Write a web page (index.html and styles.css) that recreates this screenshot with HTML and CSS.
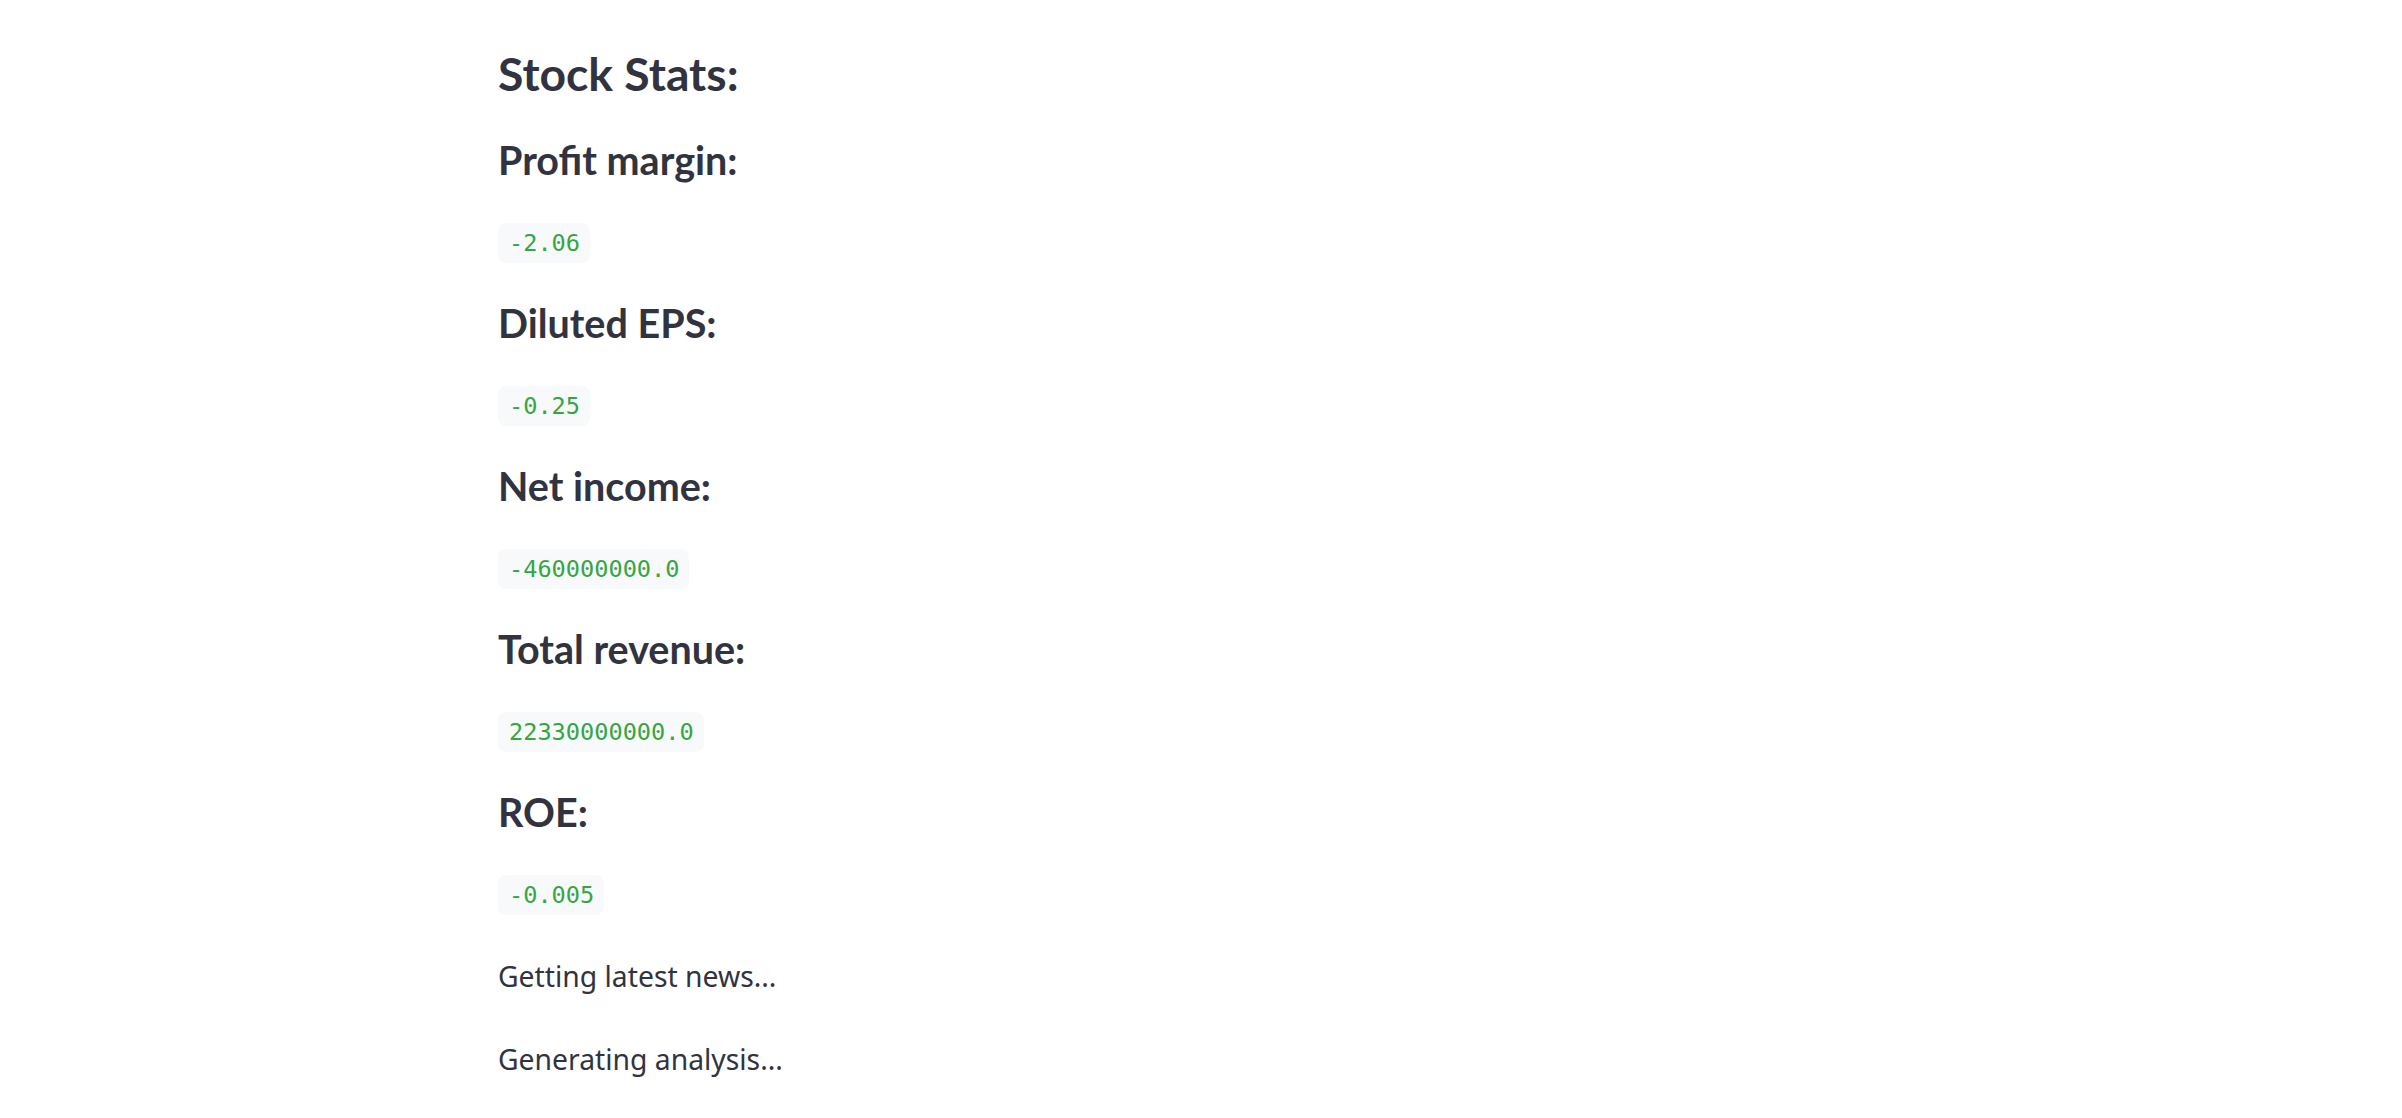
FILE: index.html
```html
<!DOCTYPE html>
<html>
<head>
<meta charset="utf-8">
<link rel="stylesheet" href="styles.css">
</head>
<body>
<main class="main">
  <h2 class="title">Stock Stats:</h2>
  <h4 class="label">Profit margin:</h4>
  <div class="val"><code>-2.06</code></div>
  <h4 class="label">Diluted EPS:</h4>
  <div class="val"><code>-0.25</code></div>
  <h4 class="label">Net income:</h4>
  <div class="val"><code>-460000000.0</code></div>
  <h4 class="label">Total revenue:</h4>
  <div class="val"><code>22330000000.0</code></div>
  <h4 class="label">ROE:</h4>
  <div class="val"><code>-0.005</code></div>
  <p class="status first">Getting latest news...</p>
  <p class="status">Generating analysis...</p>
</main>
</body>
</html>
```
FILE: styles.css
```css
html, body { margin: 0; padding: 0; background: #fff; }
body { color: rgb(49, 51, 63); font-family: "Noto Sans", sans-serif; }
.main { width: 1406px; margin: 0 auto; padding: 46px 0 40px; }
.title { margin: 0; font-family: Lato, "Noto Sans", sans-serif; font-size: 46.3px; line-height: 1.2; font-weight: 700; }
.label { margin: 36px 0 0; font-family: Lato, "Noto Sans", sans-serif; font-size: 39.5px; line-height: 1.2; font-weight: 700; }
.title + .label { margin-top: 34.6px; }
.val { margin-top: 39.6px; line-height: 0; }
.val code {
  display: inline-block;
  font-family: "DejaVu Sans Mono", monospace;
  font-size: 23.6px;
  line-height: 30px;
  padding: 5px 10px 5px 11px;
  border-radius: 8px;
  background: rgb(248, 249, 251);
  color: rgb(52, 166, 66);
}
.status { margin: 37.7px 0 0; font-size: 28.3px; line-height: 1.6; }
.status.first { margin-top: 39.4px; }
```
